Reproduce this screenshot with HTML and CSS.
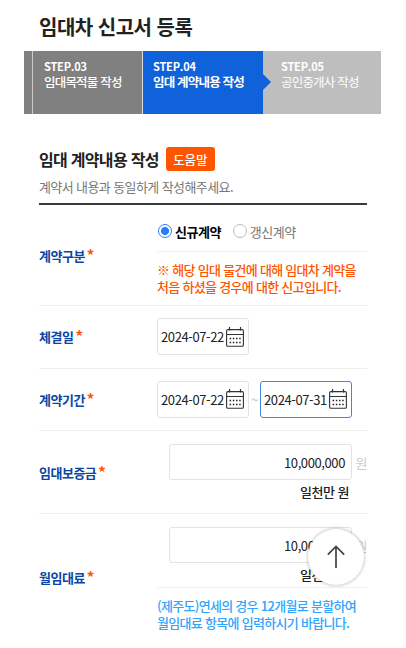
FILE: index.html
```html
<!DOCTYPE html>
<html lang="ko">
<head>
    <meta charset="UTF-8">
    <meta name="viewport" content="width=device-width, initial-scale=1.0">
    <title>임대차 신고서 등록</title>
    <link rel="stylesheet" href="styles.css">
</head>
<body>
    <svg class="sprite" width="0" height="0">
        <symbol id="calendar" viewBox="0 0 18 20">
            <rect x="0.6" y="2.6" width="16.8" height="16.6" rx="1.3" fill="none" stroke="#333" stroke-width="1.1"/>
            <path d="M0.6 7.5H17.4M3.5 0V3.6M14.5 0V3.6" fill="none" stroke="#333" stroke-width="1.2"/>
            <path d="M3.6 11.5h1.5M6.8 11.5h1.5M10 11.5h1.5M13.2 11.5h1.5M3.6 15.5h1.5M6.8 15.5h1.5M10 15.5h1.5M13.2 15.5h1.5" stroke="#222" stroke-width="1.5"/>
        </symbol>
    </svg>

    <h1>임대차 신고서 등록</h1>

    <div class="steps">
        <div class="step step-prev"></div>
        <div class="step step-done"><strong>STEP.03</strong><span>임대목적물 작성</span></div>
        <div class="step step-active"><strong>STEP.04</strong><span>임대 계약내용 작성</span></div>
        <div class="step step-next"><strong>STEP.05</strong><span>공인중개사 작성</span></div>
    </div>

    <form class="content">
        <div class="section-head">
            <h2>임대 계약내용 작성</h2>
            <button type="button" class="help">도움말</button>
        </div>
        <p class="desc">계약서 내용과 동일하게 작성해주세요.</p>

        <!-- Contract type -->
        <div class="row row-type">
            <div class="label">계약구분<em>*</em></div>
            <div class="field">
                <div class="radios">
                    <label class="radio checked"><i></i>신규계약</label>
                    <label class="radio"><i></i>갱신계약</label>
                </div>
                <p class="note note-warn">※ 해당 임대 물건에 대해 임대차 계약을<br>처음 하셨을 경우에 대한 신고입니다.</p>
            </div>
        </div>

        <!-- Dates -->
        <div class="row row-date">
            <div class="label">체결일<em>*</em></div>
            <div class="field dates">
                <div class="date"><span>2024-07-22</span><svg><use href="#calendar"/></svg></div>
            </div>
        </div>
        <div class="row row-date">
            <div class="label">계약기간<em>*</em></div>
            <div class="field dates">
                <div class="date"><span>2024-07-22</span><svg><use href="#calendar"/></svg></div>
                <span class="tilde">~</span>
                <div class="date focus"><span>2024-07-31</span><svg><use href="#calendar"/></svg></div>
            </div>
        </div>

        <!-- Amounts -->
        <div class="row row-deposit">
            <div class="label">임대보증금<em>*</em></div>
            <div class="field">
                <div class="money"><div class="amount">10,000,000</div><span class="unit">원</span></div>
                <div class="reading">일천만 원</div>
            </div>
        </div>
        <div class="row row-rent">
            <div class="label">월임대료<em>*</em></div>
            <div class="field">
                <div class="money"><div class="amount">10,000,000</div><span class="unit">원</span></div>
                <div class="reading">일천만 원</div>
                <p class="note note-info">(제주도)연세의 경우 12개월로 분할하여<br>월임대료 항목에 입력하시기 바랍니다.</p>
            </div>
        </div>
    </form>

    <button type="button" class="top-button">
        <svg width="18" height="24" viewBox="0 0 18 24"><path d="M9 23V1.5M0.8 9.7L9 1.5L17.2 9.7" fill="none" stroke="#444" stroke-width="1.7"/></svg>
    </button>
</body>
</html>
```

FILE: styles.css
```css
* {
    box-sizing: border-box;
}

body {
    font-family: "Noto Sans CJK KR", sans-serif;
    font-size: 13px;
    letter-spacing: -0.5px;
    background-color: #fff;
    color: #222;
    margin: 0;
    height: 648px;
    overflow: hidden;
}

h1, h2, p {
    margin: 0;
}

button {
    font-family: inherit;
    border: none;
    padding: 0;
}

.sprite {
    display: block;
}

h1 {
    font-size: 20px;
    font-weight: 700;
    line-height: 30px;
    letter-spacing: -0.5px;
    padding: 12px 0 9px 39px;
}

/* Step bar */
.steps {
    display: flex;
    width: 357px;
    height: 63px;
    margin-left: 24px;
}

.step {
    position: relative;
    display: flex;
    flex-direction: column;
    padding: 8px 0 0 10px;
    color: #fff;
    font-weight: 500;
    line-height: 15px;
    white-space: nowrap;
}

.step strong {
    font-size: 11px;
    font-weight: 700;
    letter-spacing: -0.2px;
}

.step span {
    font-size: 12.5px;
    letter-spacing: -0.8px;
}

.step-prev {
    width: 9px;
    padding: 0;
    background-color: #808080;
    border-right: 1px solid #ccc;
}

.step-done {
    width: 110px;
    padding-left: 11px;
    background-color: #808080;
    border-right: 1px solid #ddd;
}

.step-active {
    width: 120px;
    background-color: #0f62d9;
    font-weight: 700;
}

.step-active::after {
    content: "";
    position: absolute;
    z-index: 1;
    left: 119px;
    top: 22px;
    border: 9px solid transparent;
    border-left-color: #0f62d9;
    border-right: none;
}

.step-next {
    width: 118px;
    padding-left: 18px;
    background-color: #bebebe;
    font-weight: 400;
}

/* Form */
.content {
    width: 328px;
    margin-left: 39px;
    padding-top: 33px;
}

.section-head {
    display: flex;
    align-items: center;
    gap: 7px;
}

h2 {
    font-size: 16px;
    font-weight: 700;
    line-height: 24px;
    letter-spacing: -0.7px;
}

.help {
    width: 49px;
    height: 24px;
    border-radius: 3px;
    background-color: #ff5500;
    color: #fff;
    font-size: 12.5px;
    font-weight: 500;
    letter-spacing: -0.2px;
}

.desc {
    color: #777;
    line-height: 18px;
    letter-spacing: -0.6px;
    padding: 7px 0;
    border-bottom: 2px solid #3a3a3a;
}

.row {
    display: flex;
    align-items: center;
    border-bottom: 1px solid #eee;
}

.row-type {
    height: 101px;
}

.row-date {
    height: 62.5px;
}

.row-deposit {
    height: 83px;
}

.row-rent {
    height: 127px;
    border-bottom: none;
}

.label {
    width: 118px;
    color: #0b46a5;
    font-weight: 700;
}

.label em {
    color: #ff5500;
    font-size: 15px;
    font-style: normal;
    line-height: 1;
    margin-left: 2px;
}

.field {
    width: 210px;
    align-self: stretch;
}

.radios {
    display: flex;
    align-items: center;
    gap: 12px;
    height: 47px;
    padding: 6px 0 0 1px;
    border-bottom: 1px solid #f1f1f1;
}

.radio {
    display: flex;
    align-items: center;
    gap: 3px;
    color: #777;
}

.radio i {
    width: 14px;
    height: 14px;
    border: 1.5px solid #bbb;
    border-radius: 50%;
}

.radio.checked {
    color: #000;
    font-weight: 700;
}

.radio.checked i {
    border-color: #2b7fff;
    background: radial-gradient(circle, #2b7fff 3.6px, #fff 4.4px);
}

.note {
    font-weight: 500;
    line-height: 16.5px;
    letter-spacing: -0.7px;
    white-space: nowrap;
}

.note-warn {
    color: #ff5500;
    padding-top: 10px;
}

.note-info {
    color: #32a4fc;
    padding-top: 10px;
    border-top: 1px solid #f1f1f1;
}

.dates {
    display: flex;
    align-items: center;
}

.date {
    display: flex;
    align-items: center;
    justify-content: space-between;
    width: 92px;
    height: 37px;
    padding: 0 4px 0 3px;
    border: 1px solid #e3e3e3;
    border-radius: 3px;
}

.date span {
    letter-spacing: -0.4px;
}

.date svg {
    width: 18px;
    height: 20px;
}

.date.focus {
    border-color: #3f86e0;
}

.tilde {
    width: 11px;
    text-align: center;
    color: #bbb;
}

.money {
    display: flex;
    align-items: center;
    justify-content: space-between;
    padding: 13px 0 0 12px;
}

.amount {
    width: 183px;
    height: 36px;
    line-height: 35px;
    padding-right: 6px;
    border: 1px solid #e3e3e3;
    border-radius: 3px;
    text-align: right;
    letter-spacing: -0.4px;
}

.unit {
    color: #ccc;
}

.reading {
    padding-right: 18px;
    text-align: right;
    line-height: 20px;
    margin: 2px 0;
    font-weight: 500;
    letter-spacing: -0.5px;
}

/* Scroll to top */
.top-button {
    position: absolute;
    left: 308px;
    top: 529px;
    display: flex;
    align-items: center;
    justify-content: center;
    width: 56px;
    height: 56px;
    border-radius: 50%;
    background-color: #fff;
    box-shadow: 0 0 3px 1px rgba(0, 0, 0, 0.2);
}
```
